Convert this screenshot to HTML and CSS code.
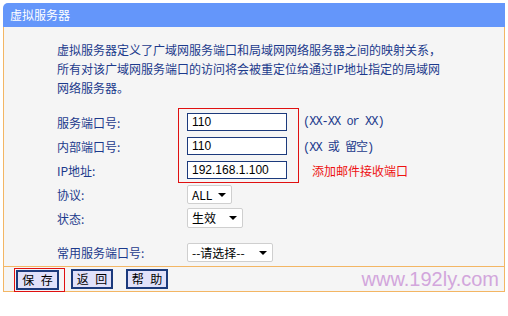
FILE: index.html
```html
<!DOCTYPE html>
<html>
<head>
<meta charset="utf-8">
<title>虚拟服务器</title>
<link rel="stylesheet" href="styles.css">
</head>
<body>

<div class="panel">
  <div class="title">虚拟服务器</div>

  <div class="content">
    <p class="intro">虚拟服务器定义了广域网服务端口和局域网网络服务器之间的映射关系，所有对该广域网服务端口的访问将会被重定位给通过IP地址指定的局域网网络服务器。</p>

    <div class="form">
      <div class="label">服务端口号:</div>
      <div class="ctrl"><div class="input">110</div></div>
      <div class="hint">(XX-XX or XX)</div>

      <div class="label">内部端口号:</div>
      <div class="ctrl"><div class="input">110</div></div>
      <div class="hint">(XX 或 留空)</div>

      <div class="label">IP地址:</div>
      <div class="ctrl"><div class="input">192.168.1.100</div></div>
      <div class="hint note">添加邮件接收端口</div>

      <div class="label">协议:</div>
      <div class="ctrl"><div class="select sel-proto">ALL<span class="arrow"></span></div></div>
      <div class="hint"></div>

      <div class="label">状态:</div>
      <div class="ctrl"><div class="select sel-state">生效<span class="arrow"></span></div></div>
      <div class="hint"></div>

      <div class="label common">常用服务端口号:</div>
      <div class="ctrl common"><div class="select sel-common">--请选择--<span class="arrow"></span></div></div>
      <div class="hint common"></div>

      <!-- red annotation round the three inputs -->
      <div class="mark-inputs"></div>
    </div>
  </div>

  <div class="footer">
    <span class="mark-save"><button class="btn">保 存</button></span>
    <button class="btn">返 回</button>
    <button class="btn">帮 助</button>
    <span class="watermark">www.192ly.com</span>
  </div>
</div>

</body>
</html>
```

FILE: styles.css
```css
body {
	margin: 0;
	padding: 3px 0 0 3px;
	background: #ffffff;
	font-family: "Noto Sans CJK SC", "Liberation Sans", sans-serif;
	font-size: 12px;
	color: #1c3a8c;
}

.panel {
	width: 502px;
}

.title {
	height: 24px;
	line-height: 24px;
	padding-left: 7px;
	background: #6496fa;
	border-top-left-radius: 5px;
	color: #ffffff;
	font-size: 12px;
}

.content {
	background: #f5f5f5;
	border-left: 1px solid #f3b664;
	border-right: 1px solid #f3b664;
	padding: 13px 0 12px 53px;
}

.intro {
	margin: 0;
	width: 390px;
	line-height: 19px;
}

/* form rows */
.form {
	position: relative;
	margin-top: 13px;
	display: grid;
	grid-template-columns: 130px 116px 1fr;
	grid-auto-rows: 24px;
}

.label,
.ctrl,
.hint {
	display: flex;
	align-items: center;
}

.common {
	margin-top: 21px;
}

.input {
	box-sizing: border-box;
	width: 100px;
	height: 18px;
	line-height: 16px;
	padding-left: 4px;
	background: #ffffff;
	border: 1px solid #1c3a7c;
	color: #000000;
	font-family: "Liberation Sans", sans-serif;
	font-size: 12px;
}

.hint {
	font-family: "Liberation Mono", "Noto Sans CJK SC", monospace;
	font-size: 12px;
	letter-spacing: -1px;
	white-space: pre;
	color: #1c3a8c;
}

.hint.note {
	padding-left: 9px;
	font-family: "Noto Sans CJK SC", sans-serif;
	letter-spacing: 0;
	color: #ee1111;
}

.select {
	position: relative;
	box-sizing: border-box;
	height: 19px;
	line-height: 17px;
	padding-left: 4px;
	background: #ffffff;
	border: 1px solid #cfcfcf;
	border-radius: 2px;
	color: #000000;
}

.sel-proto { width: 45px; }
.sel-state { width: 56px; height: 20px; line-height: 18px; }
.sel-common { width: 86px; }

.arrow {
	position: absolute;
	right: 5px;
	top: 7px;
	width: 0;
	height: 0;
	border-left: 4px solid transparent;
	border-right: 4px solid transparent;
	border-top: 4px solid #000000;
}

.mark-inputs {
	position: absolute;
	left: 121px;
	top: -2px;
	width: 119px;
	height: 73px;
	border: 1px solid #e01010;
}

/* bottom bar */
.footer {
	display: flex;
	align-items: center;
	height: 24px;
	padding-left: 10px;
	padding-right: 5px;
	background: #f5f5f5;
	border: 1px solid #f3b664;
}

.btn {
	box-sizing: border-box;
	width: 42px;
	height: 20px;
	margin: 0 13px 0 0;
	padding: 0 0 0 2px;
	background: #e1e1fa;
	border: 2px solid #1c3a7c;
	color: #000000;
	font-family: "Noto Sans CJK SC", sans-serif;
	font-size: 12px;
	letter-spacing: 2px;
	line-height: 16px;
	white-space: nowrap;
}

.mark-save {
	display: flex;
	margin-right: 6px;
	margin-top: 2px;
	padding: 1px 5px 1px 1px;
	border: 1px solid #e01010;
}

.mark-save .btn {
	width: 43px;
	margin: 0;
}

.watermark {
	margin-left: auto;
	font-family: "Liberation Sans", sans-serif;
	font-size: 20px;
	color: #d2a6dc;
}
```
